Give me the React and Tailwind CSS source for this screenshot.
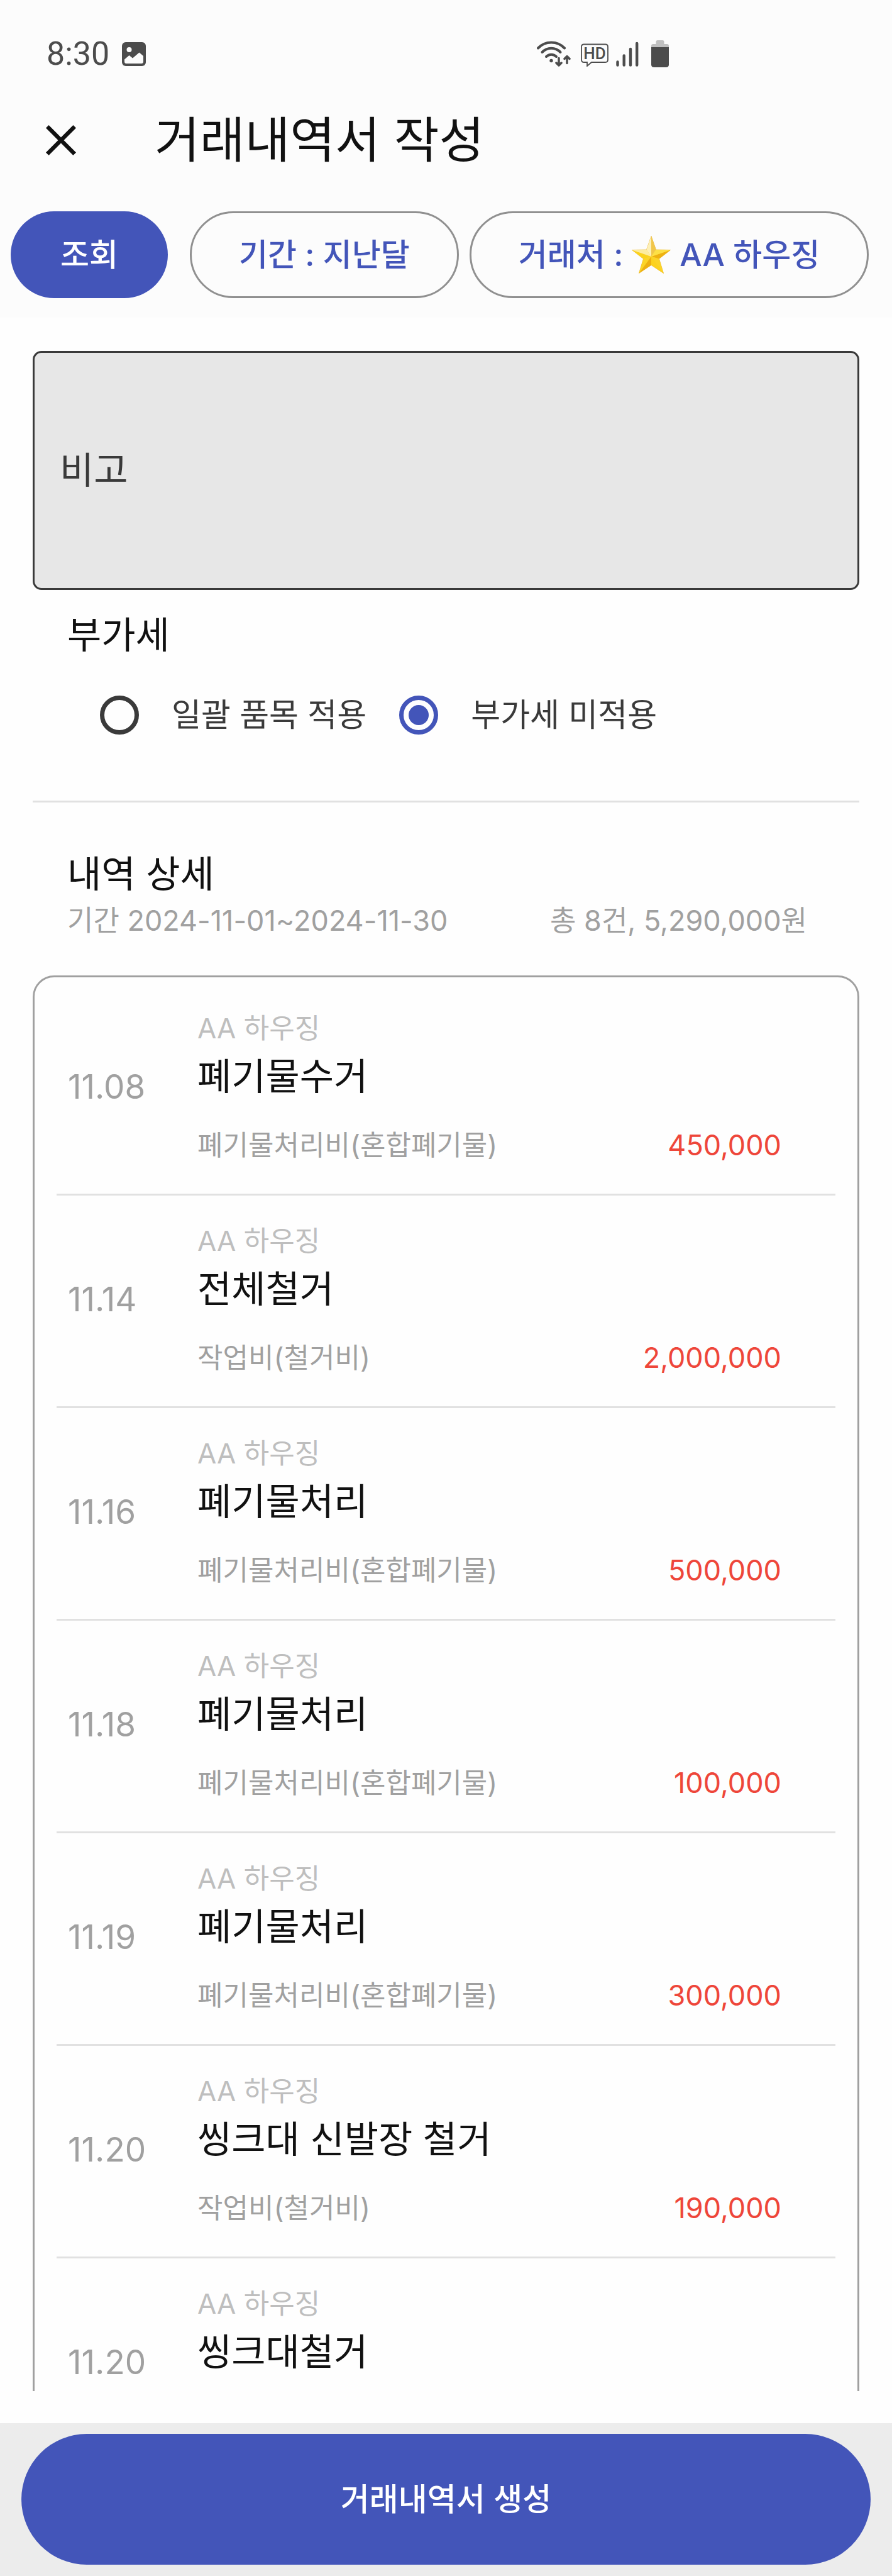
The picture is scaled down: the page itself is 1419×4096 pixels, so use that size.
import React, { useState } from "react";

const transactions = [
  { date: "11.08", client: "AA 하우징", title: "폐기물수거", item: "폐기물처리비(혼합폐기물)", amount: "450,000" },
  { date: "11.14", client: "AA 하우징", title: "전체철거", item: "작업비(철거비)", amount: "2,000,000" },
  { date: "11.16", client: "AA 하우징", title: "폐기물처리", item: "폐기물처리비(혼합폐기물)", amount: "500,000" },
  { date: "11.18", client: "AA 하우징", title: "폐기물처리", item: "폐기물처리비(혼합폐기물)", amount: "100,000" },
  { date: "11.19", client: "AA 하우징", title: "폐기물처리", item: "폐기물처리비(혼합폐기물)", amount: "300,000" },
  { date: "11.20", client: "AA 하우징", title: "씽크대 신발장 철거", item: "작업비(철거비)", amount: "190,000" },
  { date: "11.20", client: "AA 하우징", title: "씽크대철거" },
];

const vatOptions = [
  { value: "all", label: "일괄 품목 적용" },
  { value: "none", label: "부가세 미적용" },
];

const PictureIcon = () => (
  <svg width="38" height="38" viewBox="0 0 38 38" aria-hidden="true">
    <rect width="38" height="38" rx="6" fill="#4c4c4c" />
    <circle cx="11.5" cy="12" r="4" fill="#fcfcfc" />
    <path d="M4 27.5 L11.5 21 L17 25.5 L27.5 16.5 L34 22 V31 Q34 34 31 34 H7 Q4 34 4 31 Z" fill="#fcfcfc" />
  </svg>
);

const WifiIcon = () => (
  <svg width="54" height="42" viewBox="0 0 54 42" fill="none" stroke="#4c4c4c" strokeWidth="4" strokeLinecap="round" strokeLinejoin="round" aria-hidden="true">
    <path d="M2 11.5 A29 29 0 0 1 44 11.5" />
    <path d="M8.5 18 A20 20 0 0 1 37.5 18" />
    <path d="M15 25 A11.5 11.5 0 0 1 31 25" />
    <circle cx="23" cy="31.5" r="2.7" fill="#4c4c4c" stroke="none" />
    <path strokeWidth="3.5" d="M35 27.5 V38.5 M31 35 L35 39 L39 35 M48 35.5 V25 M44 28.5 L48 24.5 L52 28.5" />
  </svg>
);

const HdIcon = () => (
  <svg width="44" height="40" viewBox="0 0 44 40" aria-hidden="true">
    <path
      d="M5 4.5 H39 Q43 4.5 43 8.5 V29 Q43 33 39 33 H17 L10 39 V33 H5 Q1 33 1 29 V8.5 Q1 4.5 5 4.5 Z"
      fill="none"
      stroke="#4c4c4c"
      strokeWidth="1.8"
    />
    <text x="22" y="28" textAnchor="middle" fill="#4c4c4c" className="font-['Roboto',sans-serif] text-[26px] font-medium">
      HD
    </text>
  </svg>
);

const SignalIcon = () => (
  <svg width="36" height="42" viewBox="0 0 36 42" stroke="#4c4c4c" strokeWidth="4.4" strokeLinecap="round" aria-hidden="true">
    <path d="M2.5 33.5 V38.5 M12.7 23.5 V38.5 M23 13 V38.5 M33.2 4 V38.5" />
  </svg>
);

const BatteryIcon = () => (
  <svg width="28" height="43" viewBox="0 0 28 43" aria-hidden="true">
    <path d="M0 11 V9 Q0 6 3 6 H7.5 V3 Q7.5 0 10 0 H18 Q20.5 0 20.5 3 V6 H25 Q28 6 28 9 V11 Z" fill="#c0c0c0" />
    <path d="M0 11 H28 V38.5 Q28 43 23.5 43 H4.5 Q0 43 0 38.5 Z" fill="#4c4c4c" />
  </svg>
);

const CloseIcon = () => (
  <svg width="48" height="48" viewBox="0 0 48 48" stroke="#111" strokeWidth="6.5" aria-hidden="true">
    <path d="M2.3 2.3 L45.7 45.7 M45.7 2.3 L2.3 45.7" />
  </svg>
);

const StarIcon = () => (
  <svg width="62" height="60" viewBox="0 0 62 60" aria-hidden="true">
    <defs>
      <linearGradient id="starBody" x1="0" y1="0" x2="0.6" y2="1">
        <stop offset="0" stopColor="#fde58a" />
        <stop offset="1" stopColor="#fbcb0a" />
      </linearGradient>
    </defs>
    <path
      d="M31 0.5 L38.5 22 L61.5 22.5 L43.5 36.5 L50.5 59.5 L31 46.5 L11.5 59.5 L18.5 36.5 L0.5 22.5 L23.5 22 Z"
      fill="url(#starBody)"
      stroke="#e9b53a"
      strokeWidth="0.8"
      strokeLinejoin="round"
    />
    <path d="M31 0.5 L38.5 22 L31 33 Z" fill="#f1c64a" />
    <path d="M31 0.5 L31 33 L23.5 22 Z" fill="#fdf0b8" />
    <path d="M0.5 22.5 L31 33 L18.5 36.5 Z" fill="#fbd21c" />
    <path d="M0.5 22.5 L23.5 22 L31 33 Z" fill="#fdeca0" />
    <path d="M61.5 22.5 L31 33 L43.5 36.5 Z" fill="#eeb211" />
    <path d="M61.5 22.5 L38.5 22 L31 33 Z" fill="#fde046" />
    <path d="M18.5 36.5 L31 33 L11.5 59.5 Z" fill="#fbd428" />
    <path d="M11.5 59.5 L31 33 L31 46.5 Z" fill="#edb012" />
    <path d="M50.5 59.5 L31 33 L31 46.5 Z" fill="#fcd21e" />
    <path d="M50.5 59.5 L31 33 L43.5 36.5 Z" fill="#fbd428" />
  </svg>
);

const StatusBar = () => (
  <div className="flex h-[171px] items-center justify-between pl-[74px] pr-[25%]">
    <div className="flex items-center gap-5">
      <span className="font-['Roboto',sans-serif] text-[52px] leading-[60px] text-[#4c4c4c]">8:30</span>
      <PictureIcon />
    </div>
    <div className="flex items-center">
      <WifiIcon />
      <div className="ml-4"><HdIcon /></div>
      <div className="ml-3"><SignalIcon /></div>
      <div className="ml-5"><BatteryIcon /></div>
    </div>
  </div>
);

const chipOutline =
  "flex h-[138px] items-center whitespace-nowrap rounded-full border-[3px] border-[#909090] px-[75px] text-[50px] font-medium text-[#4355b9]";

const TransactionRow = ({ date, client, title, item, amount }) => (
  <li className="flex items-center border-b-[3px] border-[#e1e1e1] pb-[49px] pl-[18px] pr-[86px] pt-11">
    <span className="w-[206px] shrink-0 text-[53px] leading-[60px] text-[#a0a0a0]">{date}</span>
    <div className="flex-1">
      <p className="text-[44px] leading-[56px] text-[#bebebe]">{client}</p>
      <p className="mt-[15px] text-[59px] leading-[68px] text-[#111]">{title}</p>
      <div className="mt-[47px] flex min-h-[56px] justify-between leading-[56px]">
        <span className="text-[44px] text-[#a0a0a0]">{item}</span>
        <span className="text-[45px] text-[#ee463a]">{amount}</span>
      </div>
    </div>
  </li>
);

const App = () => {
  const [vat, setVat] = useState("none");
  const [note, setNote] = useState("");

  return (
    <div className="flex h-screen flex-col bg-[#fefefe] font-['Inter','Noto_Sans_CJK_KR',sans-serif] text-[#111]">
      <header className="shrink-0 bg-[#fcfcfc] pb-[31px]">
        <StatusBar />
        <div className="flex h-[104px] items-center gap-[125px] pl-[73px]">
          <button type="button" aria-label="닫기">
            <CloseIcon />
          </button>
          <h1 className="text-[78px] leading-[104px]">거래내역서 작성</h1>
        </div>
        <div className="mt-[61px] flex pl-[17px]">
          <button type="button" className="h-[138px] rounded-full bg-[#4355b9] px-[79px] text-[50px] font-medium text-white">
            조회
          </button>
          <button type="button" className={`ml-[35px] ${chipOutline}`}>
            기간 : 지난달
          </button>
          <button type="button" className={`ml-[17px] ${chipOutline}`}>
            거래처 :
            <span className="mx-[14px]"><StarIcon /></span>
            AA 하우징
          </button>
        </div>
      </header>

      <main className="mb-[51px] min-h-0 flex-1 overflow-y-auto px-[52px] pt-[53px] [scrollbar-width:none]">
        <textarea
          aria-label="비고"
          placeholder="비고"
          value={note}
          onChange={(e) => setNote(e.target.value)}
          className="block h-[380px] w-full resize-none rounded-[14px] border-[3px] border-[#3a3a3a] bg-[#e7e7e7] px-10 py-[147px] text-[59px] leading-[80px] placeholder:text-[#3a3a3a]"
        />

        <fieldset>
          <legend className="pl-[55px] pt-8 text-[59px] leading-[80px]">부가세</legend>
          <div className="mt-[47px] flex gap-[52px] pl-[107px]">
            {vatOptions.map((option) => (
              <label key={option.value} className="flex items-center gap-[52px] text-[51px] leading-[80px] text-[#3a3a3a]">
                <input
                  type="radio"
                  name="vat"
                  value={option.value}
                  checked={vat === option.value}
                  onChange={() => setVat(option.value)}
                  className="grid size-[62px] appearance-none place-content-center rounded-full border-[7px] border-[#3a3a3a] checked:border-[#4355b9] checked:before:size-8 checked:before:rounded-full checked:before:bg-[#4355b9]"
                />
                {option.label}
              </label>
            ))}
          </div>
        </fieldset>

        <hr className="mt-24 border-t-[3px] border-[#e1e1e1]" />

        <section className="pt-[74px]">
          <div className="pl-[55px] pr-[83px]">
            <h2 className="text-[59px] leading-[80px]">내역 상세</h2>
            <div className="mt-[6px] flex justify-between text-[45px] leading-[56px] text-[#a0a0a0]">
              <span>기간 2024-11-01~2024-11-30</span>
              <span>총 8건, 5,290,000원</span>
            </div>
          </div>
          <ul className="mt-[59px] rounded-[34px] border-[3px] border-[#a0a0a0] px-[35px] pt-[9px]">
            {transactions.map((transaction, index) => (
              <TransactionRow key={index} {...transaction} />
            ))}
          </ul>
        </section>
      </main>

      <footer className="shrink-0 bg-[#ececec] px-[34px] pb-[18px] pt-[17px]">
        <button type="button" className="h-[208px] w-full rounded-full bg-[#4355b9] text-[50px] font-medium text-white">
          거래내역서 생성
        </button>
      </footer>
    </div>
  );
};

export default App;
